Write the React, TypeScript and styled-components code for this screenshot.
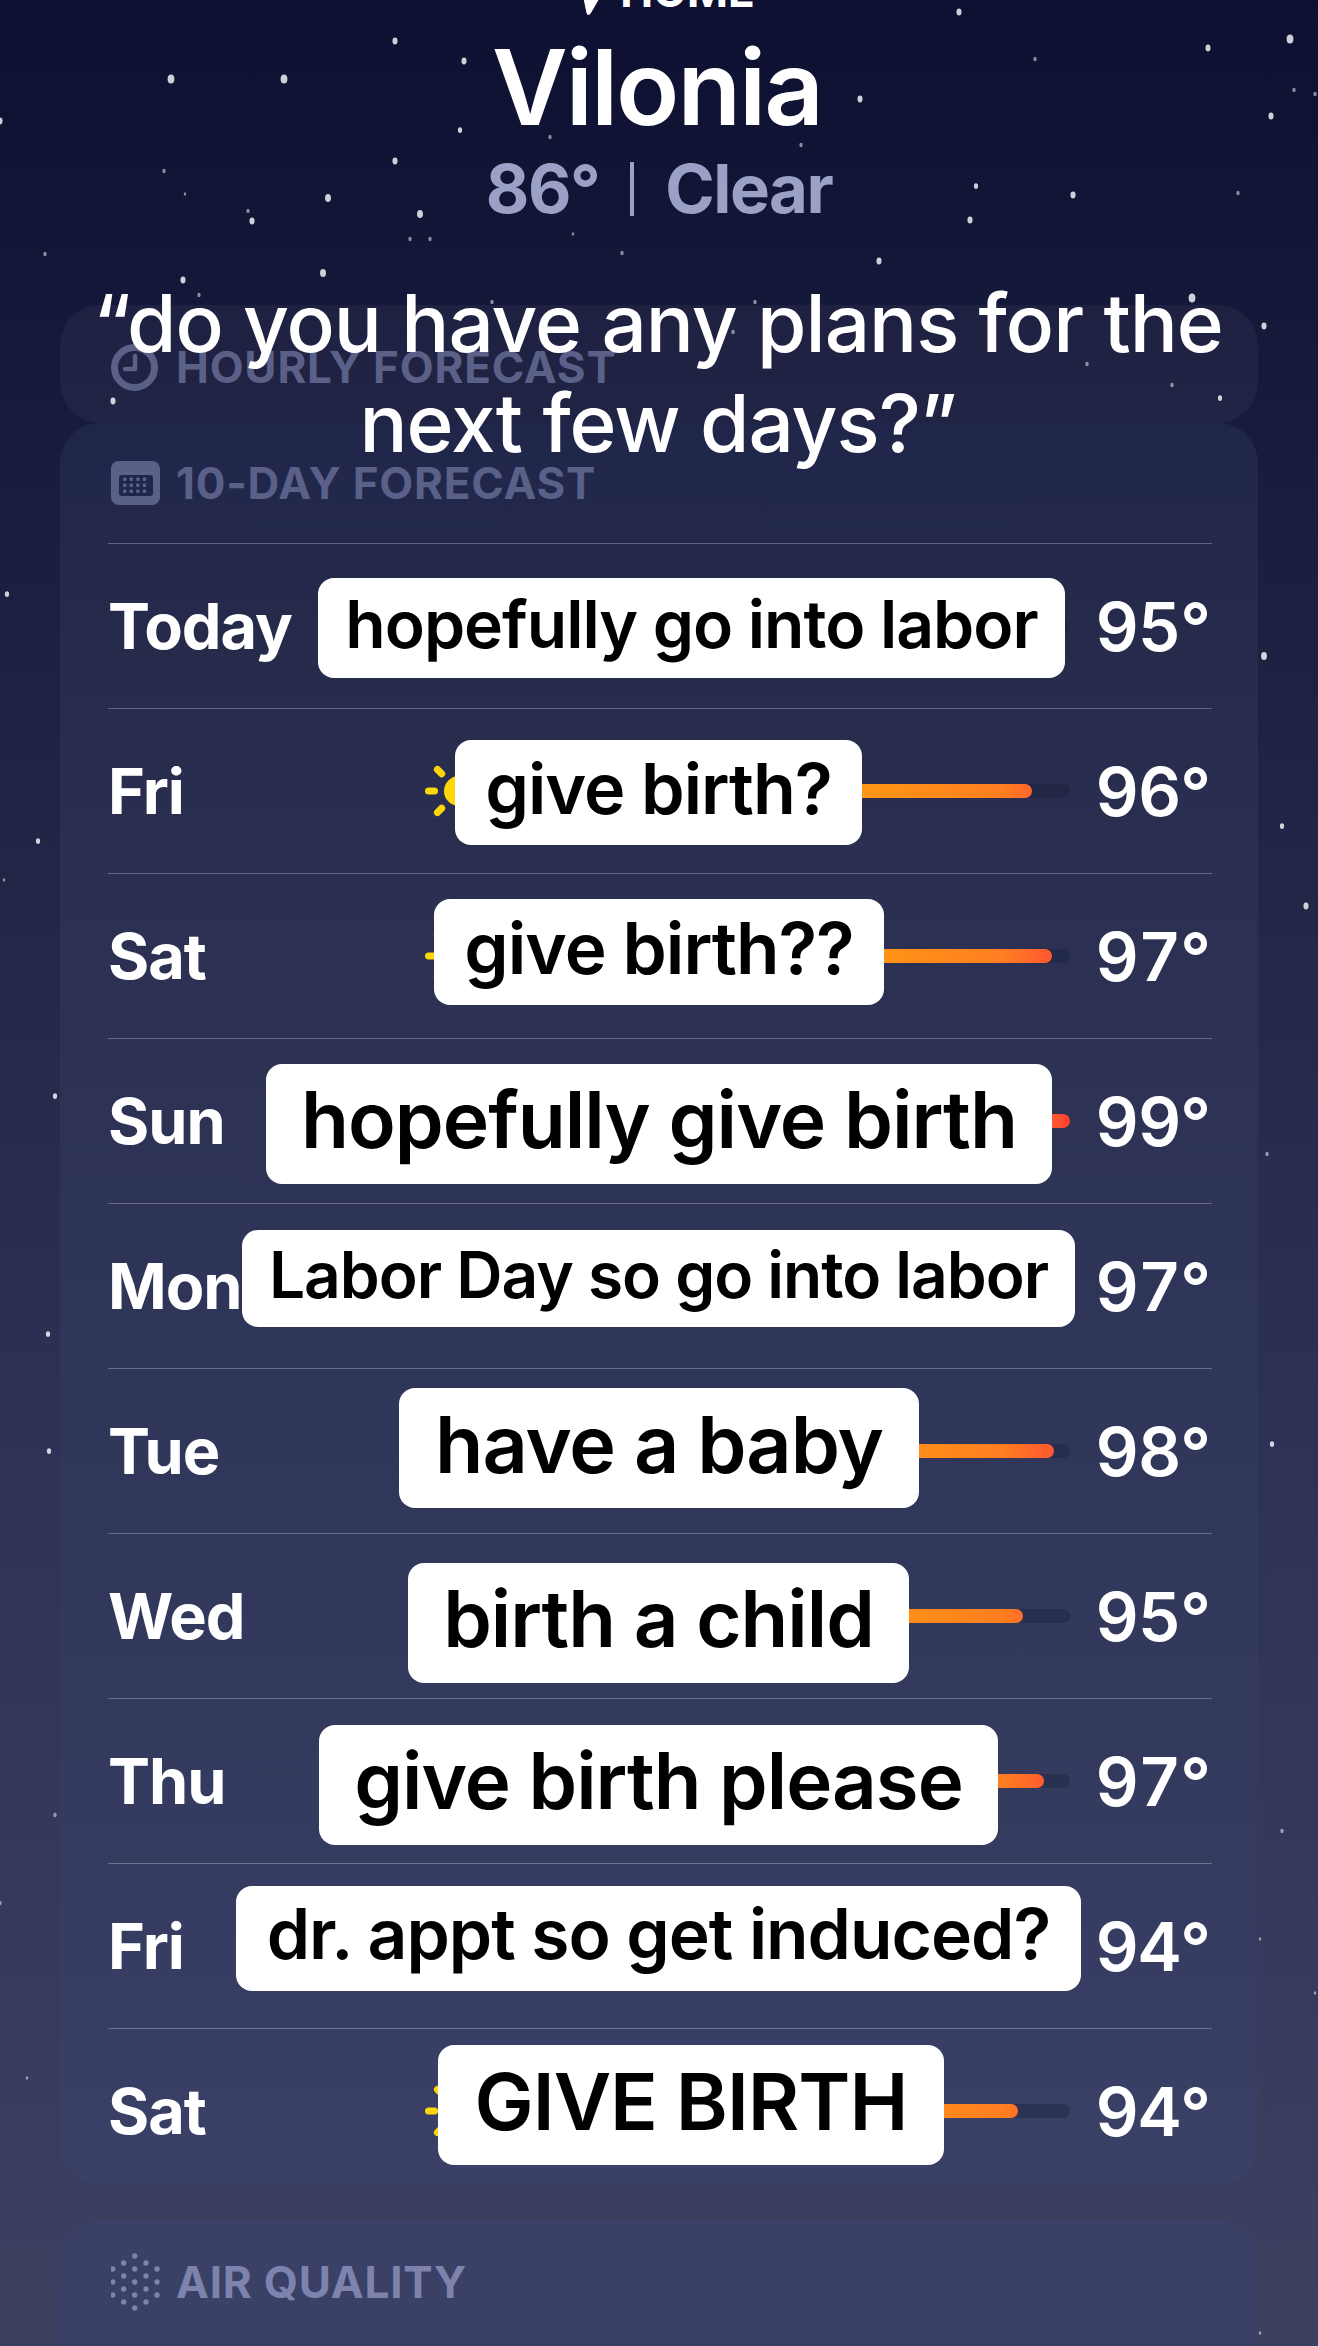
import styled, { createGlobalStyle } from "styled-components";

const GlobalStyle = createGlobalStyle`
  html, body {
    margin: 0;
    padding: 0;
    background: #0d1030;
  }
  * {
    box-sizing: border-box;
  }
`;

const stars: [number, number, number][] = [
  [395, 41, 3], [464, 61, 3], [171, 79, 4], [284, 79, 4], [959, 12, 3], [1290, 39, 4], [1208, 48, 3],
  [1035, 59, 2], [1271, 116, 3], [860, 99, 3], [1294, 90, 2], [1315, 94, 2], [0, 121, 3], [460, 130, 2.5],
  [550, 137, 2], [801, 145, 2], [395, 161, 3], [164, 171, 2], [185, 194, 1.5], [328, 198, 3.5], [248, 211, 2],
  [252, 221, 3], [420, 214, 3.5], [691, 209, 3], [976, 186, 2.5], [1073, 195, 3], [1238, 193, 2], [970, 220, 3],
  [410, 239, 2], [430, 239, 2], [573, 234, 1.5], [622, 253, 2], [45, 254, 2], [879, 261, 3], [323, 273, 3.5],
  [183, 280, 3], [199, 295, 2], [492, 302, 2], [755, 302, 2], [1192, 298, 4], [1264, 326, 3], [733, 332, 2],
  [1087, 364, 2], [1172, 385, 2], [1220, 398, 2.5], [113, 401, 3], [7, 594, 2.5], [1264, 656, 3.5], [38, 841, 2.5],
  [1282, 826, 2.5], [4, 880, 1.5], [1306, 906, 3], [55, 1096, 2.5], [1267, 1154, 2], [48, 1334, 2.5], [49, 1451, 2.5],
  [1272, 1444, 2.5], [55, 1815, 2], [1282, 1831, 2], [0, 1903, 2], [27, 2078, 1.5], [1260, 1939, 1.5], [1315, 1993, 1.5],
  [1260, 2333, 1.5],
];

type ForecastDay = {
  day: string;
  temp: string;
  note: string;
  left: number;
  width: number;
  top: number;
  height: number;
  size: number;
  barEnd: number;
};

const days: ForecastDay[] = [
  { day: "Today", temp: "95°", note: "hopefully go into labor", left: 318, width: 747, top: 34, height: 100, size: 66, barEnd: 1020 },
  { day: "Fri", temp: "96°", note: "give birth?", left: 455, width: 407, top: 31, height: 105, size: 70, barEnd: 1032 },
  { day: "Sat", temp: "97°", note: "give birth??", left: 434, width: 450, top: 25, height: 106, size: 71, barEnd: 1052 },
  { day: "Sun", temp: "99°", note: "hopefully give birth", left: 266, width: 786, top: 25, height: 120, size: 78.5, barEnd: 1070 },
  { day: "Mon", temp: "97°", note: "Labor Day so go into labor", left: 242, width: 833, top: 26, height: 97, size: 64, barEnd: 1020 },
  { day: "Tue", temp: "98°", note: "have a baby", left: 399, width: 520, top: 19, height: 120, size: 79, barEnd: 1054 },
  { day: "Wed", temp: "95°", note: "birth a child", left: 408, width: 501, top: 29, height: 120, size: 78, barEnd: 1023 },
  { day: "Thu", temp: "97°", note: "give birth please", left: 319, width: 679, top: 26, height: 120, size: 78, barEnd: 1044 },
  { day: "Fri", temp: "94°", note: "dr. appt so get induced?", left: 236, width: 845, top: 22, height: 105, size: 69.5, barEnd: 1020 },
  { day: "Sat", temp: "94°", note: "GIVE BIRTH", left: 438, width: 506, top: 16, height: 120, size: 79, barEnd: 1018 },
];

const TRACK_START = 600;
const TRACK_END = 1070;

const ClockIcon = () => (
  <svg width="47" height="47" viewBox="0 0 47 47" fill="none">
    <circle cx="23.5" cy="23.5" r="20" stroke="#5a6087" strokeWidth="7" />
    <path d="M24 12v13h-10" stroke="#5a6087" strokeWidth="4.5" strokeLinecap="round" strokeLinejoin="round" />
  </svg>
);

const CalendarIcon = () => (
  <svg width="49" height="44" viewBox="0 0 49 44">
    <rect width="49" height="44" rx="8" fill="#5a6087" />
    <rect x="8" y="14" width="34" height="21" rx="3" fill="#20264a" />
    {[0, 1, 2].map((row) =>
      [0, 1, 2, 3].map((col) => (
        <rect key={`${row}-${col}`} x={12 + col * 6.6} y={16.5 + row * 6} width="3.4" height="3.4" rx="0.8" fill="#5a6087" />
      )),
    )}
  </svg>
);

const AirIcon = () => {
  const columns: [number, number[]][] = [
    [1.7, [16, 29, 42]],
    [12.7, [10, 23, 36, 49]],
    [23.7, [3, 16, 29, 42, 55]],
    [35, [10, 23, 36, 49]],
    [46, [16, 29, 42]],
  ];
  return (
    <svg width="51" height="58" viewBox="0 0 51 58">
      {columns.map(([x, ys]) =>
        ys.map((y) => <circle key={`${x}-${y}`} cx={x} cy={y} r="2.7" fill="#7d83ad" />),
      )}
    </svg>
  );
};

const SunIcon = () => (
  <svg width="68" height="68" viewBox="0 0 68 68">
    <circle cx="34" cy="34" r="15" fill="#ffd60a" />
    {[0, 45, 90, 135, 180, 225, 270, 315].map((angle) => (
      <rect key={angle} x="30.5" y="0" width="7" height="13" rx="3.5" fill="#ffd60a" transform={`rotate(${angle} 34 34)`} />
    ))}
  </svg>
);

const LocationArrow = () => (
  <svg width="42" height="46" viewBox="0 0 42 46">
    <path d="M20 26 L40 22 L28 43 Q25 47 23.5 43 Z" fill="#fff" />
  </svg>
);

export default function App() {
  return (
    <Screen>
      <GlobalStyle />
      <StarField width="1318" height="2346" viewBox="0 0 1318 2346">
        {stars.map(([x, y, r]) => (
          <ellipse key={`${x}-${y}`} cx={x} cy={y} rx={r * 0.85} ry={r * 1.15} fill="#f1f1f6" opacity={r < 2.2 ? 0.55 : 0.85} />
        ))}
      </StarField>

      <Header>
        <HomeLabel>
          <LocationArrow />
          HOME
        </HomeLabel>
        <City>Vilonia</City>
        <Conditions>
          86° <Divider /> Clear
        </Conditions>
      </Header>

      <Caption>
        “do you have any plans for the
        <br />
        next few days?”
      </Caption>

      <HourlyCard>
        <CardTitle $color="#5a6087">
          <ClockIcon />
          HOURLY FORECAST
        </CardTitle>
      </HourlyCard>

      <ForecastCard>
        <ForecastTitle $color="#5a6087">
          <CalendarIcon />
          10-DAY FORECAST
        </ForecastTitle>
        <Rows>
          {days.map((d) => (
            <Row key={d.day + d.temp}>
              <DayName>{d.day}</DayName>
              <SunSlot>
                <SunIcon />
              </SunSlot>
              <Track>
                <Fill style={{ width: d.barEnd - TRACK_START }} />
              </Track>
              <Temp>{d.temp}</Temp>
              <Note $left={d.left} $width={d.width} $top={d.top} $height={d.height} $size={d.size}>
                {d.note}
              </Note>
            </Row>
          ))}
        </Rows>
      </ForecastCard>

      <AirCard>
        <CardTitle $color="#7d83ad">
          <AirIcon />
          AIR QUALITY
        </CardTitle>
      </AirCard>
    </Screen>
  );
}

const Screen = styled.div`
  position: relative;
  width: 1318px;
  height: 2346px;
  overflow: hidden;
  padding: 0 60px;
  font-family: Inter, "Liberation Sans", sans-serif;
  background: linear-gradient(#0d1030 0%, #15193a 15%, #232848 40%, #2f3358 65%, #3e4060 100%);
`;

const StarField = styled.svg`
  position: absolute;
  left: 0;
  top: 0;
  filter: blur(0.7px);
`;

const Header = styled.header`
  position: relative;
  display: flex;
  flex-direction: column;
  align-items: center;
  height: 335px;
  margin-top: -30px;
  color: #fff;
`;

const HomeLabel = styled.div`
  display: flex;
  align-items: flex-start;
  gap: 15px;
  height: 43px;
  font-size: 44px;
  font-weight: 700;
  line-height: 43px;
`;

const City = styled.h1`
  margin: 19px 0 0;
  padding-right: 4px;
  font-size: 104px;
  font-weight: 600;
  line-height: 110px;
  letter-spacing: -2px;
`;

const Conditions = styled.div`
  display: flex;
  align-items: center;
  gap: 31px;
  margin-top: 7px;
  font-size: 67px;
  font-weight: 700;
  line-height: 80px;
  letter-spacing: -1.5px;
  color: #9ba0c6;
`;

const Divider = styled.span`
  width: 4px;
  height: 54px;
  background: #9ba0c6;
`;

const Caption = styled.div`
  position: absolute;
  left: 0;
  right: 0;
  top: 273px;
  padding-right: 2px;
  z-index: 3;
  text-align: center;
  font-size: 80px;
  font-weight: 500;
  line-height: 100px;
  letter-spacing: -1px;
  color: #fff;
`;

const HourlyCard = styled.section`
  position: relative;
  height: 118px;
  padding: 38px 51px 0;
  background: rgba(255, 255, 255, 0.045);
  border-radius: 40px;
`;

const CardTitle = styled.div<{ $color: string }>`
  display: grid;
  grid-template-columns: 65px auto;
  justify-content: start;
  align-items: center;
  font-size: 44px;
  font-weight: 700;
  line-height: 48px;
  letter-spacing: 0.8px;
  color: ${(p) => p.$color};
`;

const ForecastTitle = styled(CardTitle)`
  margin-left: 3px;
`;

const ForecastCard = styled.section`
  position: relative;
  height: 1762px;
  padding: 36px 46px 0 48px;
  background: linear-gradient(#20264a, #262b4c 12%, #2c3153 30%, #2f3558 50%, #343a5e 75%, #3a4066);
  border-radius: 40px;
`;

const Rows = styled.div`
  margin-top: 36px;
`;

const Row = styled.div`
  position: relative;
  display: flex;
  align-items: center;
  height: 165px;
  border-top: 1.5px solid rgba(235, 235, 245, 0.3);
`;

const DayName = styled.div`
  flex: 0 0 317px;
  font-size: 63px;
  font-weight: 700;
  letter-spacing: -1px;
  color: #fff;
`;

const SunSlot = styled.div`
  display: flex;
  flex: 0 0 68px;
`;

const Track = styled.div`
  position: relative;
  flex: 0 0 ${TRACK_END - TRACK_START}px;
  height: 14px;
  margin-left: 107px;
  border-radius: 7px;
  background: rgba(20, 24, 50, 0.32);
`;

const Fill = styled.div`
  height: 100%;
  border-radius: 7px;
  background: linear-gradient(90deg, #ff9a12 50%, #ff7f20 85%, #ff5530 97%, #ff3b30);
  background-size: ${TRACK_END - TRACK_START}px 100%;
`;

const Temp = styled.div`
  flex: 1;
  padding-right: 2px;
  text-align: right;
  white-space: nowrap;
  font-size: 67px;
  font-weight: 600;
  font-variant-numeric: tabular-nums;
  letter-spacing: -1px;
  color: #fff;
`;

const Note = styled.div<{ $left: number; $width: number; $top: number; $height: number; $size: number }>`
  position: absolute;
  left: ${(p) => p.$left - 108}px;
  top: ${(p) => p.$top}px;
  width: ${(p) => p.$width}px;
  height: ${(p) => p.$height}px;
  white-space: nowrap;
  text-align: center;
  font-size: ${(p) => p.$size}px;
  font-weight: 600;
  line-height: ${(p) => p.$height - 8}px;
  letter-spacing: -1px;
  color: #000;
  background: #fff;
  border-radius: 16px;
`;

const AirCard = styled.section`
  height: 200px;
  margin-top: 35px;
  padding: 33px 51px 0;
  background: #3a4066;
  border-radius: 40px;
`;
